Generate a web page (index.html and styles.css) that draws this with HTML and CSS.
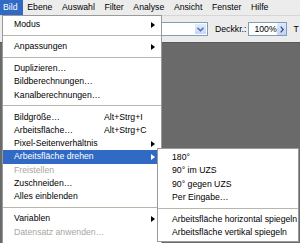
FILE: index.html
```html
<!DOCTYPE html>
<html>
<head>
    <meta charset="UTF-8">
    <title>Bild Menu</title>
    <link rel="stylesheet" href="styles.css">
</head>
<body>
    <!-- Application menu bar -->
    <div class="menubar">
        <span class="menubar-item active">Bild</span>
        <span class="menubar-item">Ebene</span>
        <span class="menubar-item">Auswahl</span>
        <span class="menubar-item">Filter</span>
        <span class="menubar-item">Analyse</span>
        <span class="menubar-item">Ansicht</span>
        <span class="menubar-item">Fenster</span>
        <span class="menubar-item">Hilfe</span>
    </div>

    <!-- Tool options bar -->
    <div class="options-bar">
        <div class="select">
            <span class="select-btn">
                <svg width="7" height="5" viewBox="0 0 7 5"><polyline points="0.5,0.8 3.5,3.8 6.5,0.8" fill="none" stroke="#4d6a9c" stroke-width="1.3"/></svg>
            </span>
        </div>
        <span class="opt-label">Deckkr.:</span>
        <div class="spin">
            <span class="spin-value">100%</span>
            <span class="spin-btn">
                <svg width="4" height="7" viewBox="0 0 4 7"><polyline points="0.7,0.7 3.2,3.5 0.7,6.3" fill="none" stroke="#2f4a80" stroke-width="1.2"/></svg>
            </span>
        </div>
        <span class="opt-label opt-t">T</span>
    </div>

    <!-- Document area -->
    <div class="workspace"></div>

    <!-- Open "Bild" menu -->
    <div class="menu main-menu">
        <div class="menu-item"><span class="label">Modus</span><span class="key"></span><span class="tail"><i class="arrow"></i></span></div>
        <div class="menu-sep"></div>
        <div class="menu-item"><span class="label">Anpassungen</span><span class="key"></span><span class="tail"><i class="arrow"></i></span></div>
        <div class="menu-sep"></div>
        <div class="menu-item"><span class="label">Duplizieren…</span></div>
        <div class="menu-item"><span class="label">Bildberechnungen…</span></div>
        <div class="menu-item"><span class="label">Kanalberechnungen…</span></div>
        <div class="menu-sep"></div>
        <div class="menu-item"><span class="label">Bildgröße…</span><span class="key">Alt+Strg+I</span><span class="tail"></span></div>
        <div class="menu-item"><span class="label">Arbeitsfläche…</span><span class="key">Alt+Strg+C</span><span class="tail"></span></div>
        <div class="menu-item"><span class="label">Pixel-Seitenverhältnis</span><span class="key"></span><span class="tail"><i class="arrow"></i></span></div>
        <div class="menu-item selected"><span class="label">Arbeitsfläche drehen</span><span class="key"></span><span class="tail"><i class="arrow"></i></span></div>
        <div class="menu-item disabled"><span class="label">Freistellen</span></div>
        <div class="menu-item"><span class="label">Zuschneiden…</span></div>
        <div class="menu-item"><span class="label">Alles einblenden</span></div>
        <div class="menu-sep"></div>
        <div class="menu-item"><span class="label">Variablen</span><span class="key"></span><span class="tail"><i class="arrow"></i></span></div>
        <div class="menu-item disabled"><span class="label">Datensatz anwenden…</span></div>
    </div>

    <!-- Submenu "Arbeitsfläche drehen" -->
    <div class="menu sub-menu">
        <div class="menu-item"><span class="label">180°</span></div>
        <div class="menu-item"><span class="label">90° im UZS</span></div>
        <div class="menu-item"><span class="label">90° gegen UZS</span></div>
        <div class="menu-item"><span class="label">Per Eingabe…</span></div>
        <div class="menu-sep"></div>
        <div class="menu-item"><span class="label">Arbeitsfläche horizontal spiegeln</span></div>
        <div class="menu-item"><span class="label">Arbeitsfläche vertikal spiegeln</span></div>
    </div>
</body>
</html>
```

FILE: styles.css
```css
:root {
    --bar-bg: #ececec;
    --bar-line: #d6d6d6;
    --workspace-bg: #6a6a6a;
    --menu-bg: #ffffff;
    --menu-border: #9a9a9a;
    --menu-sep: #b8b6ab;
    --highlight-bg: #316ac5;
    --highlight-text: #ffffff;
    --disabled-text: #a8a7a0;
    --field-border: #7f9db9;
    --text-color: #000000;
}
body {
    font-family: "Liberation Sans", Arial, sans-serif;
    font-size: 8.7px;
    margin: 0;
    padding: 0;
    height: 100vh;
    display: flex;
    flex-direction: column;
    overflow: hidden;
    color: var(--text-color);
    background-color: var(--workspace-bg);
}

/* --- Menu bar --- */
.menubar {
    height: 15px;
    display: flex;
    align-items: stretch;
    background-color: var(--bar-bg);
    flex-shrink: 0;
}
.menubar-item {
    display: flex;
    align-items: center;
    padding: 0 4.8px;
    line-height: 15px;
}
.menubar-item:first-child {
    padding-left: 3px;
    padding-right: 5px;
}
.menubar-item.active {
    background-color: var(--highlight-bg);
    color: var(--highlight-text);
}

/* --- Options bar --- */
.options-bar {
    height: 27px;
    display: flex;
    align-items: center;
    padding-left: 60px;
    background-color: var(--bar-bg);
    border-top: 1px solid var(--bar-line);
    box-sizing: border-box;
    flex-shrink: 0;
}
.select {
    width: 148px;
    height: 14px;
    background: #fff;
    border: 1px solid var(--field-border);
    box-sizing: border-box;
    display: flex;
    justify-content: flex-end;
}
.select-btn {
    width: 11px;
    margin: 1px;
    background: linear-gradient(#e4edfd, #c6d6f7);
    display: flex;
    align-items: center;
    justify-content: center;
}
.opt-label {
    margin-left: 7px;
}
.opt-t {
    margin-left: 6px;
}
.spin {
    margin-left: 2px;
    width: 39px;
    height: 14px;
    border: 1px solid var(--field-border);
    box-sizing: border-box;
    display: flex;
    background: #fff;
}
.spin-value {
    flex: 1;
    padding-left: 5px;
    line-height: 12px;
}
.spin-btn {
    width: 9px;
    background: linear-gradient(#dfe8fb, #c3d3f5);
    display: flex;
    align-items: center;
    justify-content: center;
}

/* --- Workspace --- */
.workspace {
    flex-grow: 1;
    background-color: var(--workspace-bg);
    border-top: 1px solid #5a5a5a;
}

/* --- Drop-down menus --- */
.menu {
    position: absolute;
    background-color: var(--menu-bg);
    border: 1px solid var(--menu-border);
    box-sizing: border-box;
    padding: 2px 0;
}
.main-menu {
    left: 2px;
    top: 15px;
    width: 160px;
    padding-bottom: 6px;
}
.sub-menu {
    left: 157px;
    top: 148px;
    width: 142px;
}
.menu-item {
    height: 13.3px;
    line-height: 13.3px;
    display: flex;
    align-items: center;
    padding-left: 11px;
    white-space: nowrap;
}
.sub-menu .menu-item {
    padding-left: 14px;
}
.menu-item .label {
    flex: 1;
}
.menu-item .key {
    width: 46px;
}
.menu-item .tail {
    width: 11px;
    display: flex;
    align-items: center;
}
.menu-item .arrow {
    display: block;
    width: 0;
    height: 0;
    margin-left: 1px;
    border-left: 4px solid var(--text-color);
    border-top: 3.5px solid transparent;
    border-bottom: 3.5px solid transparent;
}
.menu-item.selected {
    background-color: var(--highlight-bg);
    color: var(--highlight-text);
}
.menu-item.selected .arrow {
    border-left-color: var(--highlight-text);
}
.menu-item.disabled {
    color: var(--disabled-text);
}
.menu-sep {
    height: 1px;
    margin: 3.5px 0 4.2px 0;
    background-color: var(--menu-sep);
}
```
